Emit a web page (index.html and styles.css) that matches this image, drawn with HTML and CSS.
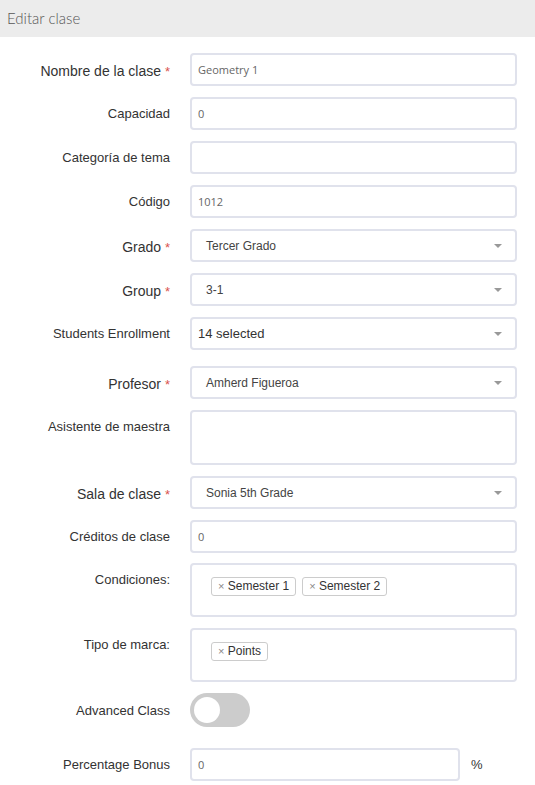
FILE: index.html
```html
<!DOCTYPE html>
<html lang="es">
<head>
<meta charset="utf-8">
<title>Editar clase</title>
<link rel="stylesheet" href="styles.css">
</head>
<body>
<div class="header">Editar clase</div>
<form class="form">
  <div class="row">
    <label class="label label-req">Nombre de la clase <span class="req">*</span></label>
    <div class="field"><div class="input">Geometry 1</div></div>
  </div>
  <div class="row">
    <label class="label">Capacidad</label>
    <div class="field"><div class="input">0</div></div>
  </div>
  <div class="row">
    <label class="label">Categoría de tema</label>
    <div class="field"><div class="input"></div></div>
  </div>
  <div class="row">
    <label class="label">Código</label>
    <div class="field"><div class="input">1012</div></div>
  </div>
  <div class="row">
    <label class="label label-req">Grado <span class="req">*</span></label>
    <div class="field"><div class="select"><span>Tercer Grado</span><i class="caret"></i></div></div>
  </div>
  <div class="row">
    <label class="label label-req">Group <span class="req">*</span></label>
    <div class="field"><div class="select"><span>3-1</span><i class="caret"></i></div></div>
  </div>
  <div class="row row-wide">
    <label class="label">Students Enrollment</label>
    <div class="field"><div class="select multi"><span>14 selected</span><i class="caret"></i></div></div>
  </div>
  <div class="row">
    <label class="label label-req">Profesor <span class="req">*</span></label>
    <div class="field"><div class="select"><span>Amherd Figueroa</span><i class="caret"></i></div></div>
  </div>
  <div class="row">
    <label class="label">Asistente de maestra</label>
    <div class="field"><div class="input tall"></div></div>
  </div>
  <div class="row">
    <label class="label label-req">Sala de clase <span class="req">*</span></label>
    <div class="field"><div class="select"><span>Sonia 5th Grade</span><i class="caret"></i></div></div>
  </div>
  <div class="row row-tight">
    <label class="label">Créditos de clase</label>
    <div class="field"><div class="input">0</div></div>
  </div>
  <div class="row">
    <label class="label">Condiciones:</label>
    <div class="field"><div class="tags"><span class="tag"><b>×</b> Semester 1</span><span class="tag"><b>×</b> Semester 2</span></div></div>
  </div>
  <div class="row">
    <label class="label">Tipo de marca:</label>
    <div class="field"><div class="tags"><span class="tag"><b>×</b> Points</span></div></div>
  </div>
  <div class="row row-toggle">
    <label class="label">Advanced Class</label>
    <div class="field"><div class="toggle"><span class="knob"></span></div></div>
  </div>
  <div class="row">
    <label class="label">Percentage Bonus</label>
    <div class="field field-suffix"><div class="input short">0</div><span class="suffix">%</span></div>
  </div>
</form>
</body>
</html>
```
FILE: styles.css
```css
* { box-sizing: border-box; }
html, body { margin: 0; padding: 0; background: #fff; }
body { font-family: "Liberation Sans", Arial, sans-serif; color: #333; width: 535px; }

.header {
  height: 37px;
  background: #ececec;
  padding: 0 7px;
  font-family: Lato, "Open Sans", sans-serif;
  font-weight: 300;
  font-size: 15px;
  line-height: 37px;
  color: #555;
}

.form {
  display: flex;
  flex-direction: column;
  gap: 11px;
  padding: 16px 18px 0 0;
}

.row {
  display: grid;
  grid-template-columns: 170px 327px;
  column-gap: 20px;
  align-items: start;
}
.row-wide { margin-bottom: 5px; }
.row-tight { margin-bottom: -1px; }
.row-toggle { margin-bottom: 10px; }
.row-toggle .label { padding-top: 10px; }

.label {
  text-align: right;
  font-size: 13px;
  line-height: 16px;
  padding-top: 9px;
  color: #333;
}
.label-req { font-size: 14px; padding-top: 10px; }
.req { color: #d9534f; font-size: 13px; }

.input, .select, .tags {
  border: 2px solid #e0e2ec;
  border-radius: 4px;
  background: #fff;
}
.input {
  height: 33px;
  padding: 0 6px;
  font-family: "Open Sans", Lato, sans-serif;
  font-size: 11px;
  line-height: 29px;
  color: #666;
}
.input.tall { height: 55px; }
.input.short { width: 270px; }

.select {
  height: 33px;
  padding: 0 14px;
  display: flex;
  align-items: center;
  justify-content: space-between;
  font-size: 12px;
  color: #444;
}
.select.multi { padding-left: 6px; font-size: 13px; color: #333; }
.caret {
  width: 0; height: 0;
  border-left: 4px solid transparent;
  border-right: 4px solid transparent;
  border-top: 4px solid #999;
  margin-right: -1px;
}

.tags {
  height: 54px;
  padding: 12px 19px;
  display: flex;
  align-items: flex-start;
  gap: 6px;
}
.tag {
  display: inline-block;
  border: 1px solid #ccc;
  border-radius: 3px;
  padding: 0 6px;
  height: 19px;
  font-size: 12px;
  line-height: 17px;
  color: #333;
}
.tag b { font-weight: normal; color: #888; font-size: 11px; }

.toggle {
  width: 60px;
  height: 34px;
  border-radius: 17px;
  background: #ccc;
  padding: 4px;
  display: flex;
}
.knob {
  width: 26px;
  height: 26px;
  border-radius: 50%;
  background: #fff;
}

.field-suffix { display: flex; align-items: center; gap: 11px; }
.suffix { font-size: 13px; color: #333; }
```
